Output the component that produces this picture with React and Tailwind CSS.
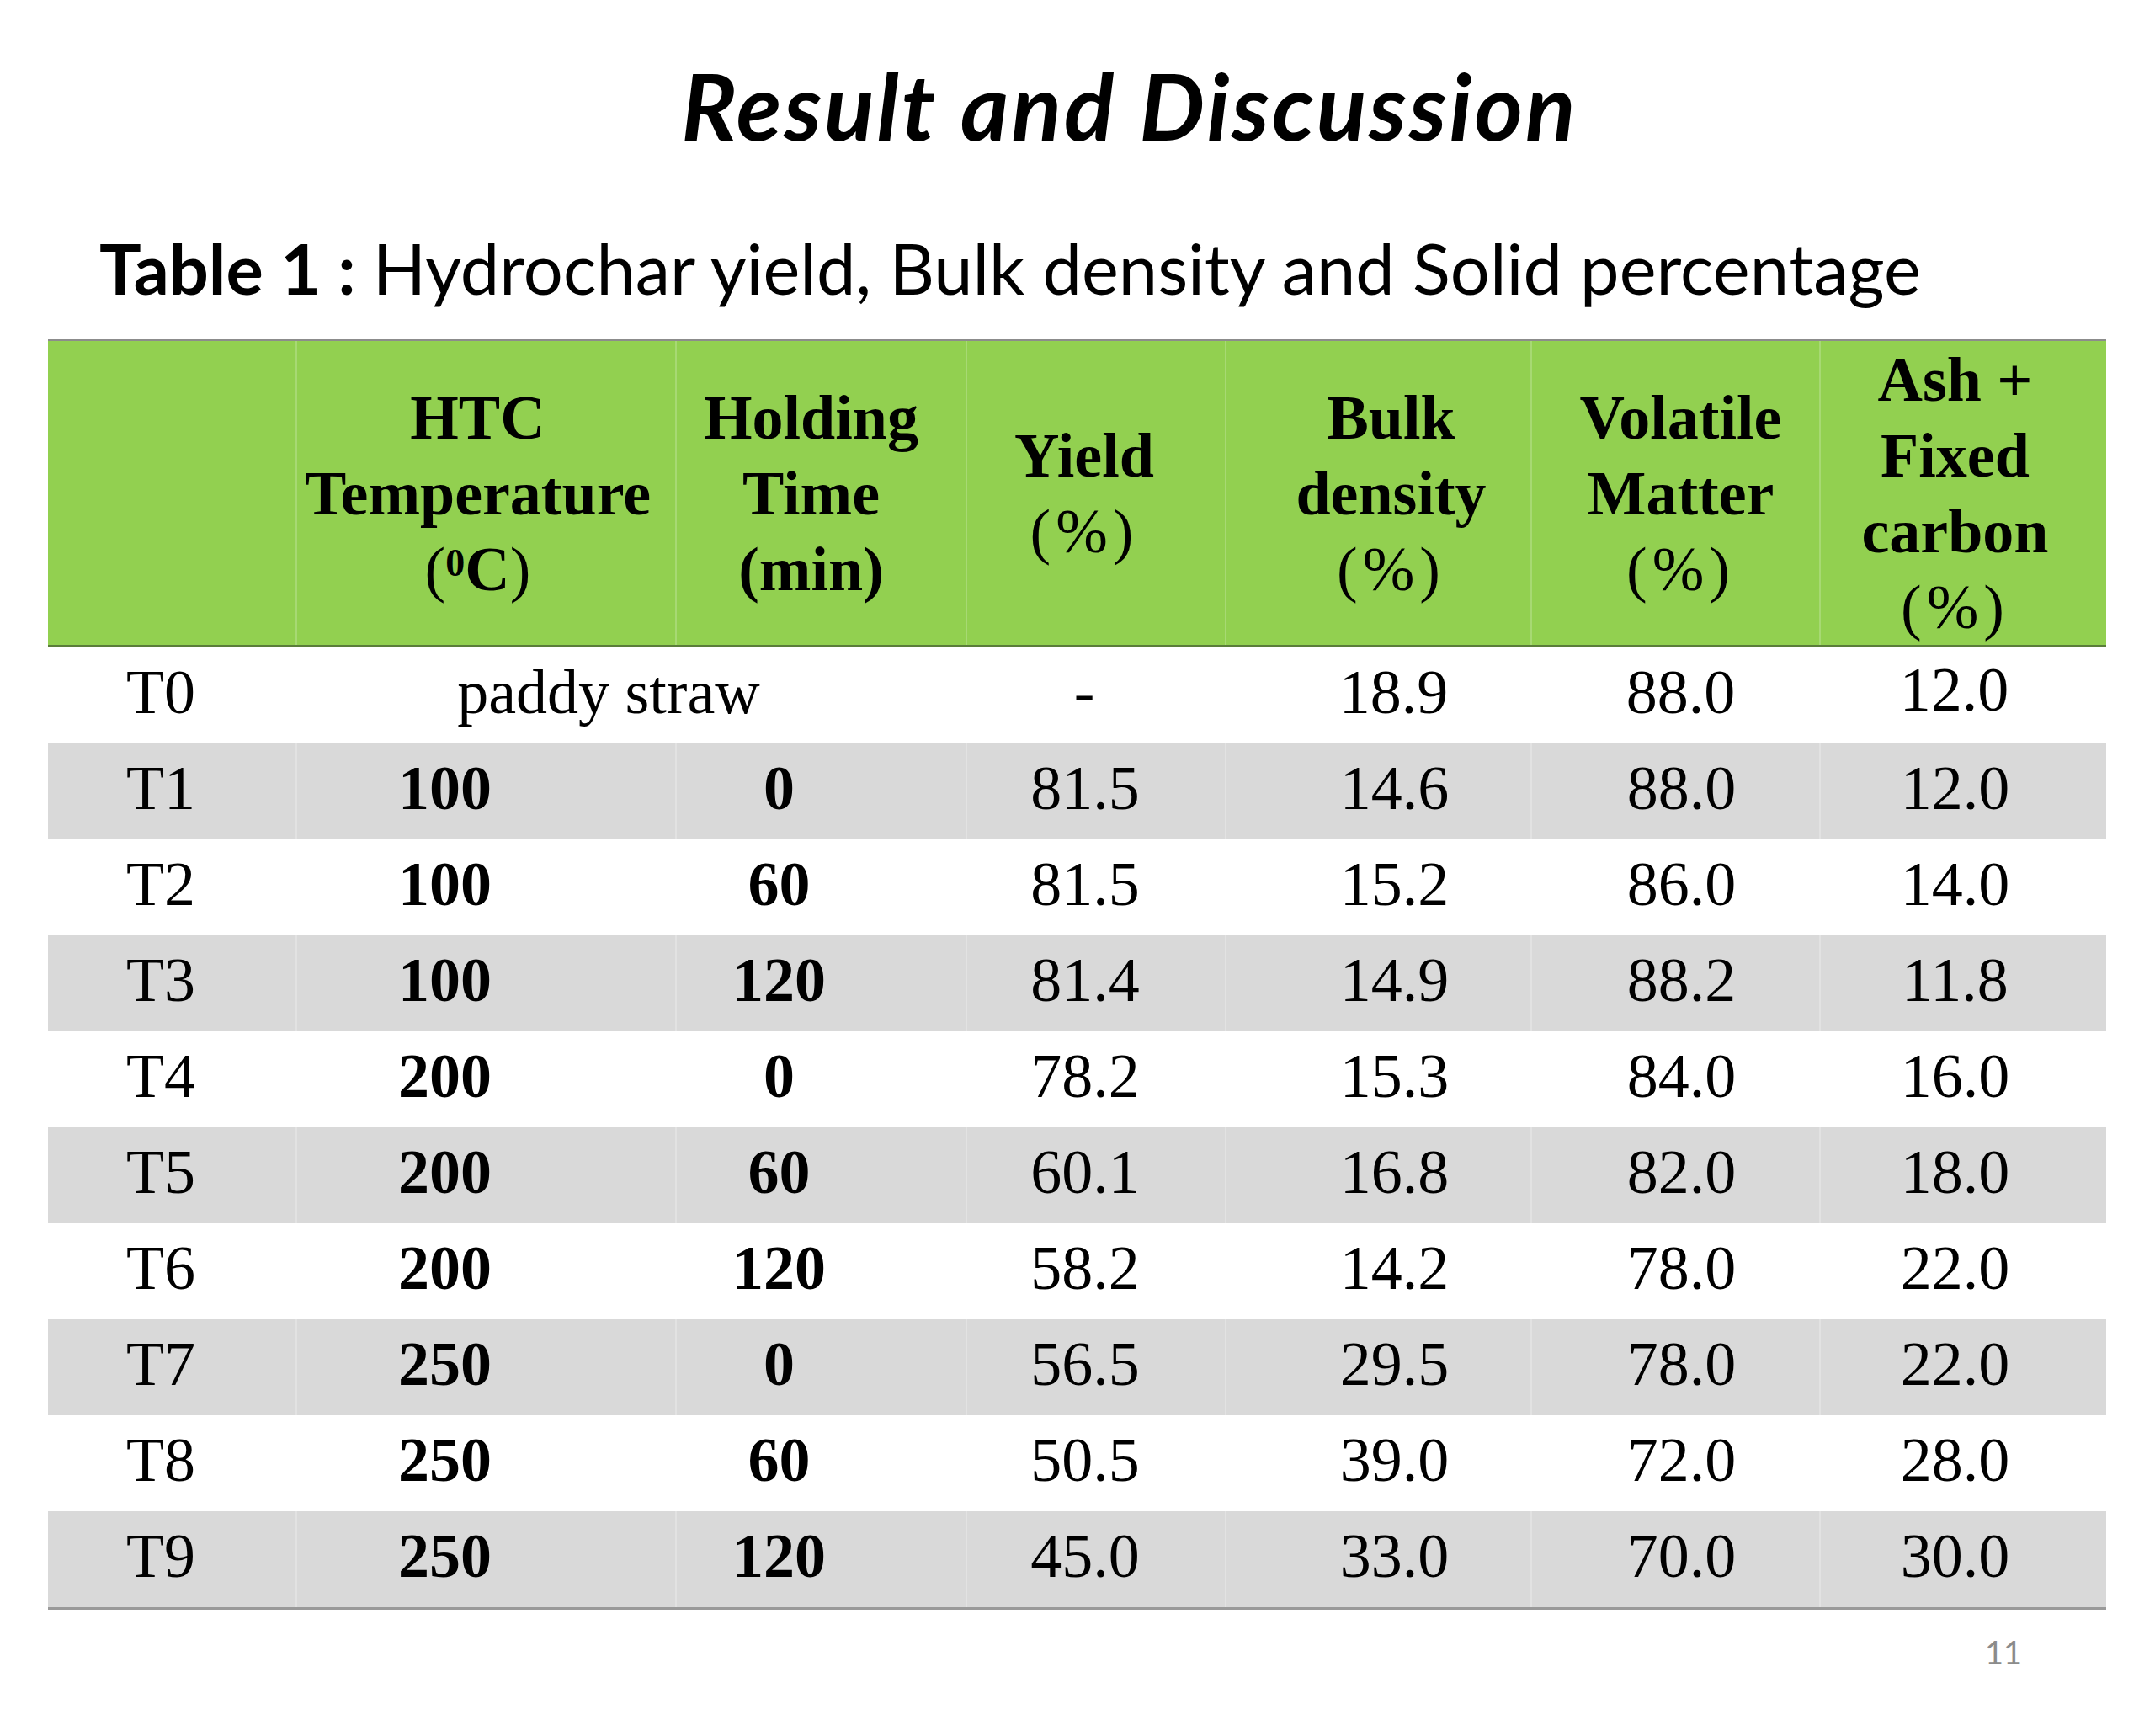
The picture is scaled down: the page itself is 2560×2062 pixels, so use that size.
import React from "react";

const GRID = "grid grid-cols-[294px_451px_345px_308px_363px_343px_341px]";

const rows = [
  ["T1", "100", "0", "81.5", "14.6", "88.0", "12.0"],
  ["T2", "100", "60", "81.5", "15.2", "86.0", "14.0"],
  ["T3", "100", "120", "81.4", "14.9", "88.2", "11.8"],
  ["T4", "200", "0", "78.2", "15.3", "84.0", "16.0"],
  ["T5", "200", "60", "60.1", "16.8", "82.0", "18.0"],
  ["T6", "200", "120", "58.2", "14.2", "78.0", "22.0"],
  ["T7", "250", "0", "56.5", "29.5", "78.0", "22.0"],
  ["T8", "250", "60", "50.5", "39.0", "72.0", "28.0"],
  ["T9", "250", "120", "45.0", "33.0", "70.0", "30.0"],
];

const dataPad = [
  "pr-[26px]",
  "pr-[98px] font-bold",
  "pr-[100px] font-bold",
  "pr-[26px]",
  "pl-[38px]",
  "pl-[14px]",
  "pr-[20px]",
];

function Pct() {
  return <span className="font-normal tracking-[6px]">(%)</span>;
}

function HeadCell({ pad, children, first }) {
  return (
    <div
      className={`flex items-center justify-center text-center font-bold leading-[90px] ${pad} ${
        first ? "" : "border-l-2 border-white/20"
      }`}
    >
      <div>{children}</div>
    </div>
  );
}

export default function App() {
  return (
    <div className="w-[2560px] h-[2062px] bg-white overflow-hidden">
      <div className="pt-[69px] flex justify-center pl-[124px]">
        <h1 className="h-[110px] text-[110px] leading-none font-bold italic tracking-[3px] text-black font-['Lato','Open_Sans',sans-serif]">
          Result and Discussion
        </h1>
      </div>
      <div className="mt-[98px] pl-[118px] h-[83px] text-[83px] leading-none text-black font-['Lato','Open_Sans',sans-serif]">
        <span className="font-bold">Table 1 : </span>
        <span>Hydrochar yield, Bulk density and Solid percentage</span>
      </div>

      <div className="mt-[43px] ml-[57px] w-[2445px] font-['Liberation_Serif','Times_New_Roman',serif] text-[74px] text-black">
        {/* header */}
        <div
          className={`${GRID} h-[366px] bg-[#92d050] border-t-2 border-t-[#8c8c8c] border-b-[3px] border-b-[#5a7d3a]`}
        >
          <HeadCell pad="" first>
            {""}
          </HeadCell>
          <HeadCell pad="pr-[20px]">
            HTC
            <br />
            Temperature
            <br />
            <span className="font-normal">(</span>
            <span className="inline-block text-[46px] leading-none align-[0.36em]">0</span>C
            <span className="font-normal">)</span>
          </HeadCell>
          <HeadCell pad="pr-[24px]">
            Holding
            <br />
            Time
            <br />
            (min)
          </HeadCell>
          <HeadCell pad="pr-[28px]">
            Yield
            <br />
            <Pct />
          </HeadCell>
          <HeadCell pad="pl-[30px]">
            Bulk
            <br />
            density
            <br />
            <Pct />
          </HeadCell>
          <HeadCell pad="pl-[12px]">
            Volatile
            <br />
            Matter
            <br />
            <Pct />
          </HeadCell>
          <HeadCell pad="pr-[20px]">
            Ash +
            <br />
            Fixed
            <br />
            carbon
            <br />
            <Pct />
          </HeadCell>
        </div>

        {/* T0 row */}
        <div className={`${GRID} h-[114px] bg-white leading-none`}>
          <div className="flex items-center justify-center pr-[26px] pb-[9px]">T0</div>
          <div className="col-span-2 flex items-center justify-center pr-[52px] pb-[9px]">
            paddy straw
          </div>
          <div className="flex items-center justify-center pr-[26px] pb-[9px]">-</div>
          <div className="flex items-center justify-center pl-[38px] pb-[9px]">18.9</div>
          <div className="flex items-center justify-center pl-[14px] pb-[9px]">88.0</div>
          <div className="flex items-center justify-center pr-[20px] pb-[14px]">12.0</div>
        </div>

        {rows.map((r, i) => (
          <div
            key={r[0]}
            className={`${GRID} h-[114px] leading-none ${
              i % 2 === 0 ? "bg-[#d9d9d9]" : "bg-white"
            }`}
          >
            {r.map((v, j) => (
              <div
                key={j}
                className={`flex items-center justify-center pb-[9px] ${dataPad[j]} ${
                  j === 0 ? "" : "border-l-2 border-white/25"
                }`}
              >
                {v}
              </div>
            ))}
          </div>
        ))}
        <div className="h-[3px] bg-[#9a9a9a]" />
      </div>

      <div className="mt-[31px] flex justify-end pr-[158px]">
        <span className="text-[38px] leading-none text-[#8b8b8b] font-['Lato','Open_Sans',sans-serif]">
          11
        </span>
      </div>
    </div>
  );
}
